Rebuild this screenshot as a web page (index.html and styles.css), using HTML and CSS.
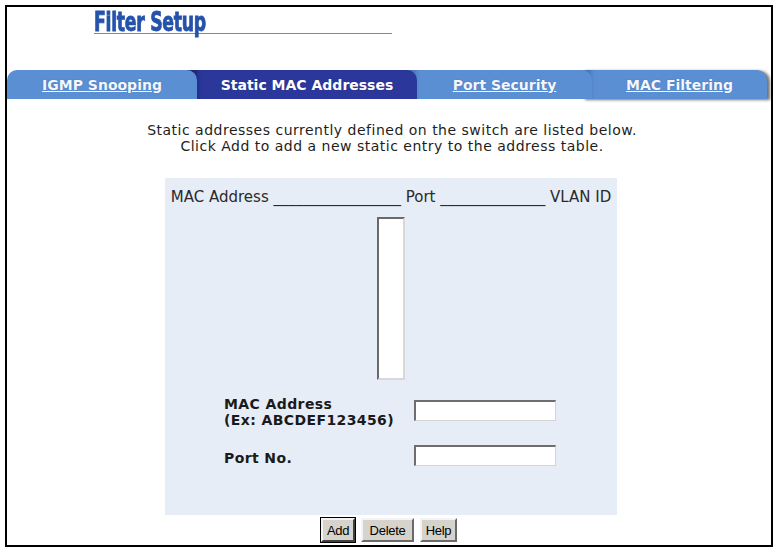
FILE: index.html
```html
<!DOCTYPE html>
<html>
<head>
<meta charset="utf-8">
<title>Filter Setup</title>
<link rel="stylesheet" href="styles.css">
</head>
<body>
<div class="frame">
  <div class="title"><span class="title-text">Filter Setup</span></div>
  <div class="tabs">
    <a class="tab tab-1">IGMP Snooping</a>
    <a class="tab tab-2 active">Static MAC Addresses</a>
    <a class="tab tab-3">Port Security</a>
    <a class="tab tab-4">MAC Filtering</a>
  </div>
  <div class="desc">
    <p class="desc-line">Static addresses currently defined on the switch are listed below.</p>
    <p class="desc-line">Click Add to add a new static entry to the address table.</p>
  </div>
  <div class="panel">
    <div class="list-head">MAC Address _________________ Port ______________ VLAN ID</div>
    <div class="listbox"></div>
    <div class="form">
      <div class="label">MAC Address<br>(Ex: ABCDEF123456)</div>
      <div class="field first"><input type="text" class="input"></div>
      <div class="label second">Port No.</div>
      <div class="field second"><input type="text" class="input"></div>
    </div>
  </div>
  <div class="buttons">
    <button class="btn btn-add default">Add</button>
    <button class="btn btn-delete">Delete</button>
    <button class="btn btn-help">Help</button>
  </div>
</div>
</body>
</html>
```
FILE: styles.css
```css
html, body {
  margin: 0;
  padding: 0;
  background: #ffffff;
}
body {
  font-family: "DejaVu Sans", Verdana, sans-serif;
  color: #1c1c1c;
}
.frame {
  margin: 5px 0 0 5px;
  width: 764px;
  height: 538px;
  border: 2px solid #000;
  overflow: hidden;
  display: flex;
  flex-direction: column;
}
.title {
  margin: 3px 0 0 87px;
  width: 298px;
  height: 23px;
  line-height: 24px;
  border-bottom: 1px solid #7c88a4;
  white-space: nowrap;
}
.title-text {
  display: inline-block;
  font-family: "DejaVu Sans Condensed", "DejaVu Sans", sans-serif;
  font-stretch: condensed;
  font-weight: bold;
  font-size: 26px;
  color: #2552aa;
  transform: scaleX(0.74);
  transform-origin: left center;
  letter-spacing: -0.4px;
  -webkit-text-stroke: 0.8px #2552aa;
}
.tabs {
  margin-top: 36px;
  display: flex;
  height: 29px;
}
.tab {
  position: relative;
  display: flex;
  align-items: center;
  justify-content: center;
  box-sizing: border-box;
  height: 29px;
  font-size: 14px;
  font-weight: bold;
  color: #f4f7ff;
  text-decoration: underline;
  background: #5a8fd3;
  border-radius: 0 10px 0 0;
  white-space: nowrap;
  text-shadow: 0 0 1px rgba(30, 50, 120, 0.5);
}
.tab-1 {
  width: 190px;
  border-radius: 10px 10px 0 0;
  z-index: 4;
}
.tab-2 {
  width: 230px;
  margin-left: -10px;
  padding-left: 10px;
  z-index: 3;
  background: #2c379c;
  text-decoration: none;
  color: #ffffff;
  box-shadow: inset 14px 0 5px -4px rgba(10, 15, 60, 0.45);
}
.tab-3 {
  width: 185px;
  margin-left: -10px;
  padding-left: 10px;
  z-index: 2;
  box-shadow: inset 13px 0 4px -4px rgba(20, 40, 100, 0.25);
}
.tab-4 {
  width: 185px;
  margin-left: -10px;
  padding-left: 10px;
  z-index: 1;
  box-shadow: inset 13px 0 4px -4px rgba(20, 40, 100, 0.25), 3px 1px 3px rgba(0, 0, 0, 0.55);
}
.desc {
  margin: 23px 0 0 0;
  padding-left: 6px;
  display: flex;
  flex-direction: column;
  align-items: center;
  color: #1e1e1e;
}
.desc-line {
  margin: 0;
  font-size: 14px;
  line-height: 16px;
  height: 16px;
  letter-spacing: 0.5px;
  white-space: nowrap;
}
.panel {
  margin: 24px 0 0 158px;
  width: 452px;
  height: 337px;
  background: #e6edf6;
  display: flex;
  flex-direction: column;
  align-items: center;
}
.list-head {
  margin-top: 11px;
  font-size: 15px;
  line-height: 17px;
  color: #2a2a2a;
  white-space: nowrap;
}
.listbox {
  margin-top: 11px;
  width: 24px;
  height: 159px;
  background: #ffffff;
  border-top: 2px solid #6a6a6a;
  border-left: 2px solid #6a6a6a;
  border-right: 2px solid #d8d8d8;
  border-bottom: 2px solid #d8d8d8;
}
.form {
  align-self: flex-start;
  margin: 16px 0 0 59px;
  display: grid;
  grid-template-columns: 190px 142px;
  row-gap: 17px;
}
.label {
  font-size: 14px;
  font-weight: bold;
  line-height: 16px;
  letter-spacing: 0.4px;
  color: #1a1a1a;
  white-space: nowrap;
}
.label.second {
  padding-top: 5px;
}
.field.first {
  padding-top: 4px;
}
.input {
  display: block;
  box-sizing: border-box;
  width: 142px;
  height: 21px;
  margin: 0;
  padding: 0 2px;
  background: #ffffff;
  border-top: 2px solid #6e6e6e;
  border-left: 2px solid #6e6e6e;
  border-right: 1px solid #d4d4d4;
  border-bottom: 1px solid #d4d4d4;
  font-size: 13px;
}
.buttons {
  margin: 3px 0 0 0;
  display: flex;
  justify-content: center;
  gap: 6px;
}
.btn {
  box-sizing: border-box;
  height: 24px;
  margin: 0;
  padding: 0;
  font-family: "Liberation Sans Narrow", "Liberation Sans", Arial, sans-serif;
  font-size: 13px;
  color: #000;
  background: #d6d3cc;
  border-top: 2px solid #f4f4f4;
  border-left: 2px solid #f4f4f4;
  border-right: 2px solid #6a6a6a;
  border-bottom: 2px solid #6a6a6a;
  letter-spacing: -0.3px;
}
.btn-add {
  width: 34px;
}
.btn-delete {
  width: 53px;
}
.btn-help {
  width: 37px;
}
.btn.default {
  outline: 1px solid #000;
  outline-offset: 0;
  border-right-color: #404040;
  border-bottom-color: #404040;
}
```
